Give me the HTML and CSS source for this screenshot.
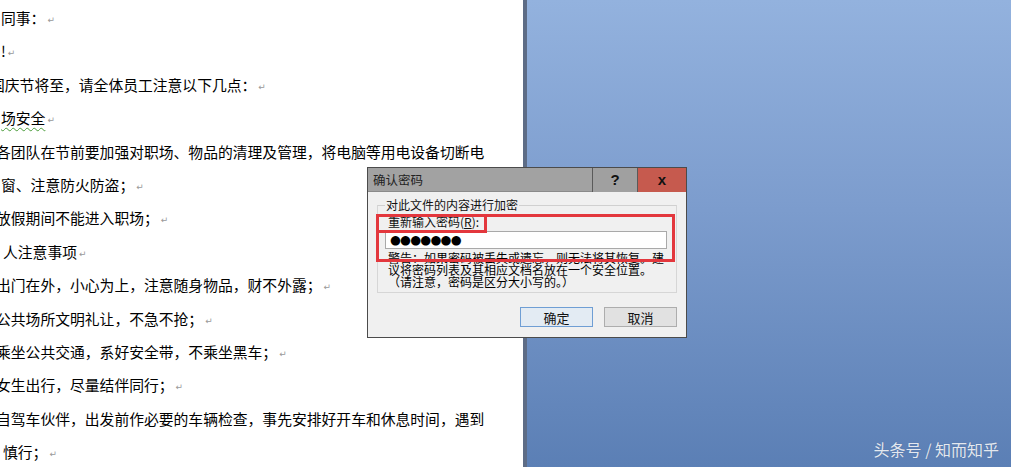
FILE: index.html
```html
<!DOCTYPE html>
<html lang="zh-CN">
<head>
<meta charset="utf-8">
<title>确认密码</title>
<link rel="stylesheet" href="styles.css">
</head>
<body>
<div class="screen">
  <div class="page">
    <p class="ln">同事：<span class="rt">↵</span></p>
    <p class="ln">!<span class="rt">↵</span></p>
    <p class="ln cut2">国庆节将至，请全体员工注意以下几点：<span class="rt">↵</span></p>
    <p class="ln"><span class="squig">场安全</span><span class="rt">↵</span></p>
    <p class="ln cut">各团队在节前要加强对职场、物品的清理及管理，将电脑等用电设备切断电</p>
    <p class="ln">窗、注意防火防盗；<span class="rt">↵</span></p>
    <p class="ln cut">放假期间不能进入职场；<span class="rt">↵</span></p>
    <p class="ln in">人注意事项<span class="rt">↵</span></p>
    <p class="ln cut">出门在外，小心为上，注意随身物品，财不外露；<span class="rt">↵</span></p>
    <p class="ln cut">公共场所文明礼让，不急不抢；<span class="rt">↵</span></p>
    <p class="ln cut">乘坐公共交通，系好安全带，不乘坐黑车；<span class="rt">↵</span></p>
    <p class="ln cut">女生出行，尽量结伴同行；<span class="rt">↵</span></p>
    <p class="ln cut">自驾车伙伴，出发前作必要的车辆检查，事先安排好开车和休息时间，遇到</p>
    <p class="ln in">慎行；<span class="rt">↵</span></p>
  </div>
  <div class="desk"></div>

  <!-- password dialog window -->
  <div class="dialog">
    <div class="titlebar">
      <span class="title">确认密码</span>
      <span class="tb help">?</span>
      <span class="tb close">x</span>
    </div>
    <div class="dbody">
      <div class="group">
        <div class="legend">对此文件的内容进行加密</div>
        <div class="label">重新输入密码(<u>R</u>):</div>
        <div class="pwd">●●●●●●●</div>
        <div class="warn">
          警告：如果密码被丢失或遗忘，则无法将其恢复。建<br>
          议将密码列表及其相应文档名放在一个安全位置。<br>
          （请注意，密码是区分大小写的。）
        </div>
      </div>
      <div class="btns">
        <span class="btn ok">确定</span>
        <span class="btn">取消</span>
      </div>
    </div>
    <div class="mark-big"></div>
    <div class="mark-small"></div>
  </div>

  <div class="water">头条号 / 知而知乎</div>
</div>
</body>
</html>
```

FILE: styles.css
```css
* { box-sizing: border-box; }

body {
  margin: 0;
  font-family: "Noto Sans CJK SC", "Liberation Sans", sans-serif;
  overflow: hidden;
}

.screen {
  position: relative;
  display: flex;
  width: 1011px;
  height: 467px;
}

/* document page */
.page {
  width: 523px;
  background: #fff;
  padding-top: 1px;
  overflow: hidden;
}
.ln {
  margin: 0;
  height: 33.4px;
  line-height: 33.4px;
  font-size: 14.8px;
  color: #000;
  white-space: nowrap;
  padding-left: 1px;
}
.cut { margin-left: -5px; }
.cut2 { margin-left: -11px; }
.in { padding-left: 3px; }
.rt {
  font-family: "DejaVu Sans", sans-serif;
  font-size: 9px;
  color: #999;
  margin-left: 2px;
  vertical-align: 1px;
}
.squig {
  text-decoration: underline wavy #4a9b3a;
  text-decoration-thickness: 1px;
  text-underline-offset: 3px;
}

/* blue background */
.desk {
  flex: 1;
  border-left: 4px solid #5d6c86;
  background: linear-gradient(180deg, #93b2de 0%, #7c9ccd 45%, #5b7fb5 100%);
}

/* dialog */
.dialog {
  position: absolute;
  left: 367px;
  top: 167px;
  width: 320px;
  height: 171px;
  border: 1px solid #4b4b4b;
  background: #f0f0f0;
  font-size: 12px;
  color: #111;
}
.titlebar {
  display: flex;
  align-items: center;
  height: 24px;
  background: #a2a2a2;
  border-bottom: 1px solid #8a8a8a;
}
.title {
  flex: 1;
  padding-left: 5px;
  font-size: 12.5px;
  color: #222;
}
.tb {
  display: flex;
  align-items: center;
  justify-content: center;
  height: 24px;
  font-family: "Liberation Sans", sans-serif;
  font-weight: bold;
  font-size: 15px;
}
.help {
  width: 46px;
  background: #a0a0a0;
  border-left: 1px solid #5a5a5a;
  border-right: 1px solid #5a5a5a;
  color: #111;
}
.close {
  width: 48px;
  background: #c65a4e;
  color: #111;
}

.dbody {
  padding: 13px 9px 8px 9px;
}
.group {
  border: 1px solid #d6d6d6;
  border-top-color: #d0d0d0;
  padding: 0 9px 5px 7px;
  height: 88px;
}
.legend {
  width: fit-content;
  margin-top: -7px;
  padding: 0 1px;
  line-height: 12px;
  background: #f0f0f0;
  color: #111;
}
.label {
  margin-top: 5px;
  padding-left: 3px;
  line-height: 12px;
}
.pwd {
  margin-top: 3px;
  height: 18px;
  background: #fff;
  border: 1px solid #a9a9a9;
  padding-left: 4px;
  font-family: "DejaVu Sans", sans-serif;
  font-size: 12.5px;
  line-height: 15px;
  letter-spacing: -0.8px;
  color: #000;
}
.warn {
  margin-top: 3px;
  padding-left: 3px;
  line-height: 12px;
  white-space: nowrap;
  color: #000;
}

.btns {
  display: flex;
  justify-content: flex-end;
  gap: 11px;
  margin-top: 14px;
}
.btn {
  display: flex;
  align-items: center;
  justify-content: center;
  width: 73px;
  height: 20px;
  border: 1px solid #adadad;
  background: #e1e1e1;
  font-size: 13px;
  color: #111;
}
.btn.ok {
  border-color: #6f9ed4;
  background: #e3ebf3;
}

/* red highlight boxes drawn over the dialog */
.mark-big, .mark-small {
  position: absolute;
  left: 8px;
  top: 46px;
  border: 3px solid #e3373d;
}
.mark-big { width: 299px; height: 48px; }
.mark-small { width: 111px; height: 19px; }

.water {
  position: absolute;
  right: 12px;
  bottom: 6px;
  font-size: 16px;
  color: rgba(255, 255, 255, 0.85);
  text-shadow: 0 0 1px rgba(60, 80, 110, 0.4);
}
```
